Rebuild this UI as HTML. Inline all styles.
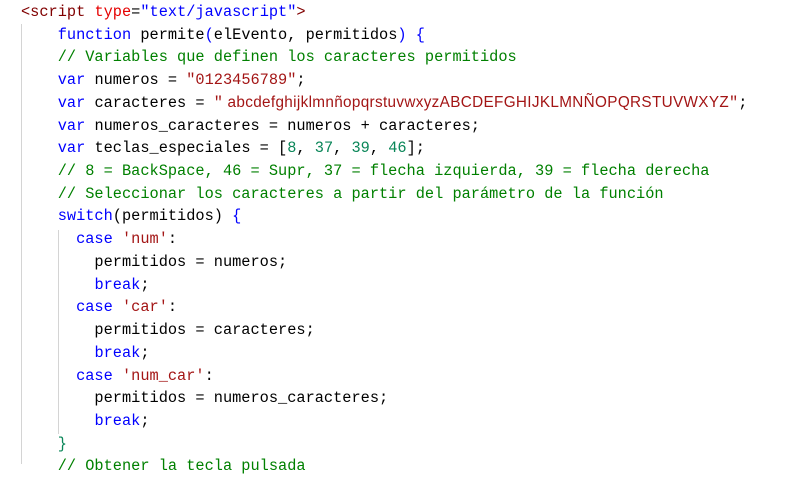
<!DOCTYPE html>
<html><head><meta charset="utf-8"><style>
html,body{margin:0;padding:0;background:#fff;width:785px;height:462px;overflow:hidden}
.c{position:absolute;left:21px;top:1px;font-family:"Liberation Mono",monospace;font-size:15.3px;line-height:22.72px;color:#000;white-space:pre}
.k{color:#0000ff}.s{color:#a31515}.g{color:#008000}.n{color:#098658}.t{color:#800000}.a{color:#e50000}.v{color:#0000ff}
.p{font-family:"Liberation Sans",sans-serif;font-size:15.3px;color:#a31515;letter-spacing:0.33px}
.gl{position:absolute;width:1px;background:#d4d4d4}
</style></head><body>
<div class="gl" style="left:21px;top:24px;height:440px"></div>
<div class="gl" style="left:58px;top:230px;height:204px"></div>
<div class="c"><span class="t">&lt;script</span> <span class="a">type</span>=<span class="v">"text/javascript"</span><span class="t">&gt;</span>
    <span class="k">function</span> permite<span class="k">(</span>elEvento, permitidos<span class="k">)</span> <span class="k">{</span>
    <span class="g">// Variables que definen los caracteres permitidos</span>
    <span class="k">var</span> numeros = <span class="s">"0123456789"</span>;
    <span class="k">var</span> caracteres = <span class="s">"</span><span class="p"> abcdefghijklmnñopqrstuvwxyzABCDEFGHIJKLMNÑOPQRSTUVWXYZ</span><span class="s">"</span>;
    <span class="k">var</span> numeros_caracteres = numeros + caracteres;
    <span class="k">var</span> teclas_especiales = [<span class="n">8</span>, <span class="n">37</span>, <span class="n">39</span>, <span class="n">46</span>];
    <span class="g">// 8 = BackSpace, 46 = Supr, 37 = flecha izquierda, 39 = flecha derecha</span>
    <span class="g">// Seleccionar los caracteres a partir del parámetro de la función</span>
    <span class="k">switch</span>(permitidos) <span class="k">{</span>
      <span class="k">case</span> <span class="s">'num'</span>:
        permitidos = numeros;
        <span class="k">break</span>;
      <span class="k">case</span> <span class="s">'car'</span>:
        permitidos = caracteres;
        <span class="k">break</span>;
      <span class="k">case</span> <span class="s">'num_car'</span>:
        permitidos = numeros_caracteres;
        <span class="k">break</span>;
    <span class="n">}</span>
    <span class="g">// Obtener la tecla pulsada</span></div>
</body></html>
